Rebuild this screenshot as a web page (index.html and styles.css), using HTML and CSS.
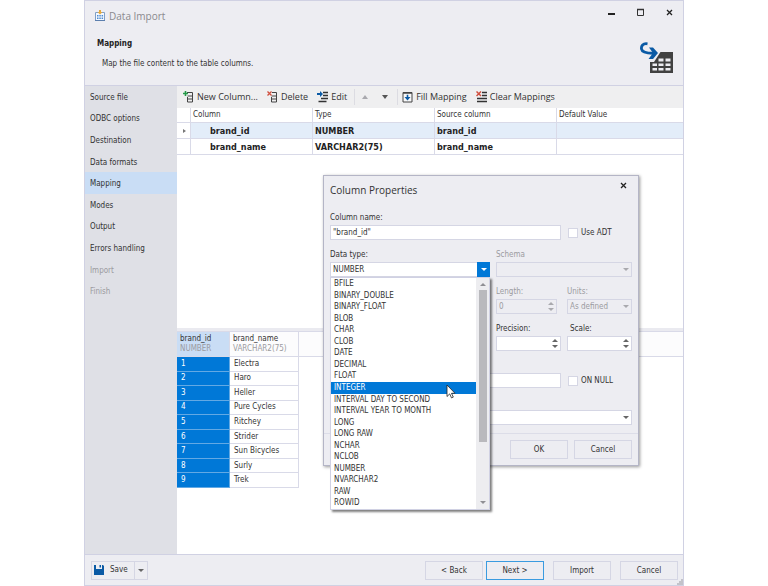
FILE: index.html
```
<!DOCTYPE html>
<html lang="en">
<head>
    <meta charset="UTF-8">
    <meta name="viewport" content="width=device-width, initial-scale=1.0">
    <title>Data Import</title>
    <link rel="stylesheet" href="styles.css">
</head>
<body>
    <div class="window">
        <header class="window-header">
            <div class="titlebar">
                <svg class="title-icon" width="12" height="12" viewBox="0 0 12 12">
                    <path d="M1.5 2.5h9v8h-9z" fill="#f4f9ff" stroke="#7f9fc6"/>
                    <path d="M1 10.500h10" stroke="#5c7fae"/>
                    <path d="M3 5h1.500v1.500H3zM5.300 5h1.500v1.500H5.300zM7.600 5h1.500v1.500H7.600zM3 7.500h1.500V9H3zM5.300 7.500h1.500V9H5.300zM7.600 7.500h1.500V9H7.600z" fill="#4d8ad0"/>
                    <path d="M5 0h2v2h1.500L6 4.500 3.500 2H5z" fill="#e6a93c"/>
                </svg>
                <h1>Data Import</h1>
                <div class="window-controls">
                    <button type="button" aria-label="Minimize"><svg width="9" height="9" viewBox="0 0 9 9"><path d="M1 5h7v2H1z" fill="#222"/></svg></button>
                    <button type="button" aria-label="Maximize"><svg width="9" height="9" viewBox="0 0 9 9"><path d="M1.500 1.500h6v6h-6z" fill="none" stroke="#333"/><path d="M1 1.500h7" stroke="#333" stroke-width="1.500"/></svg></button>
                    <button type="button" aria-label="Close"><svg width="9" height="9" viewBox="0 0 9 9"><path d="M2 2l5 5M7 2L2 7" stroke="#222" stroke-width="1.300"/></svg></button>
                </div>
            </div>
            <div class="page-info">
                <div>
                    <h2>Mapping</h2>
                    <p>Map the file content to the table columns.</p>
                </div>
                <svg width="34" height="32" viewBox="0 0 34 32">
                    <path d="M7.500 1.800C3 1 1 4 1.500 7c.6 3.500 5 4.500 13.500 4.200" fill="none" stroke="#0a5aa5" stroke-width="2.800"/>
                    <path d="M9 5.500h4l5 5.500-5 6H8.500l4.500-6z" fill="#0a5aa5"/>
                    <path d="M20.500 10H33v21H10V20h4z" fill="#414141"/>
                    <path d="M18.500 16.500h5v3h-5zM25.500 16.500h5v3h-5zM12.500 21.500h4.500v2.500h-4.500zM18.500 21.500h5v2.500h-5zM25.500 21.500h5v2.500h-5zM12.500 26h4.500v2.500h-4.500zM18.500 26h5v2.500h-5zM25.500 26h5v2.500h-5z" fill="#ededf2"/>
                </svg>
            </div>
        </header>

        <div class="workspace">
            <nav class="steps">
                <a href="#">Source file</a>
                <a href="#">ODBC options</a>
                <a href="#">Destination</a>
                <a href="#">Data formats</a>
                <a href="#" class="active">Mapping</a>
                <a href="#">Modes</a>
                <a href="#">Output</a>
                <a href="#">Errors handling</a>
                <a href="#" class="disabled">Import</a>
                <a href="#" class="disabled">Finish</a>
            </nav>

            <main class="content">
                <div class="toolbar">
                    <button type="button" class="tool">
                        <svg width="11" height="12" viewBox="0 0 11 12">
                            <path d="M4 1.500h5.500v9.500h-5V6M4.500 5h5M4.500 8h5" fill="none" stroke="#444"/>
                            <path d="M2.500 0v5M0 2.500h5" stroke="#259a48" stroke-width="1.600"/>
                        </svg>
                        New Column...
                    </button>
                    <button type="button" class="tool">
                        <svg width="11" height="12" viewBox="0 0 11 12">
                            <path d="M5 1.500h4.500v9.500h-5V6M4.500 5h5M4.500 8h5" fill="none" stroke="#444"/>
                            <path d="M.5.500l4 4M4.500.500l-4 4" stroke="#d0503f" stroke-width="1.300"/>
                        </svg>
                        Delete
                    </button>
                    <button type="button" class="tool">
                        <svg width="11" height="12" viewBox="0 0 11 12">
                            <path d="M6 1.500h5M6 4.500h5M4 7.500h7M1.500 10.500h8" stroke="#333" stroke-width="1.400"/>
                            <path d="M0 2h3V0l3 3-3 3V4H0z" fill="#0a5aa5"/>
                        </svg>
                        Edit
                    </button>
                    <span class="separator"></span>
                    <button type="button" class="tool arrow-tool" aria-label="Move up" disabled><span class="arrow up"></span></button>
                    <button type="button" class="tool arrow-tool" aria-label="Move down"><span class="arrow"></span></button>
                    <span class="separator"></span>
                    <button type="button" class="tool">
                        <svg width="11" height="12" viewBox="0 0 11 12">
                            <path d="M1 1.500h9v9.500H1z" fill="#f8f8f8" stroke="#444"/>
                            <path d="M1 2h9" stroke="#444" stroke-width="1.500"/>
                            <path d="M4.700 3.800h1.600V6H8.500l-3 3.500L2.500 6h2.200z" fill="#0a5aa5"/>
                        </svg>
                        Fill Mapping
                    </button>
                    <button type="button" class="tool">
                        <svg width="11" height="12" viewBox="0 0 11 12">
                            <path d="M6 1.500h5M6 4.500h5M1 7.500h10M1 10.500h10" stroke="#333" stroke-width="1.300"/>
                            <path d="M.5.500l4.500 4.500M5 .500L.5 5" stroke="#d0503f" stroke-width="1.500"/>
                        </svg>
                        Clear Mappings
                    </button>
                </div>

                <div class="mapping-pane">
                    <table class="mapping">
                        <colgroup>
                            <col class="col-marker"><col class="col-wide"><col class="col-wide"><col class="col-wide"><col>
                        </colgroup>
                        <thead>
                            <tr><th></th><th>Column</th><th>Type</th><th>Source column</th><th>Default Value</th></tr>
                        </thead>
                        <tbody>
                            <tr class="selected"><td><span class="row-marker"></span></td><td class="name">brand_id</td><td>NUMBER</td><td>brand_id</td><td></td></tr>
                            <tr><td></td><td class="name">brand_name</td><td>VARCHAR2(75)</td><td>brand_name</td><td></td></tr>
                        </tbody>
                    </table>
                </div>

                <div class="preview-pane">
                    <table class="preview">
                        <colgroup><col class="col-id"><col class="col-name"><col></colgroup>
                        <thead>
                            <tr>
                                <th class="selected">brand_id<small>NUMBER</small></th>
                                <th>brand_name<small>VARCHAR2(75)</small></th>
                                <th></th>
                            </tr>
                        </thead>
                        <tbody>
                            <tr><td>1</td><td>Electra</td></tr>
                            <tr><td>2</td><td>Haro</td></tr>
                            <tr><td>3</td><td>Heller</td></tr>
                            <tr><td>4</td><td>Pure Cycles</td></tr>
                            <tr><td>5</td><td>Ritchey</td></tr>
                            <tr><td>6</td><td>Strider</td></tr>
                            <tr><td>7</td><td>Sun Bicycles</td></tr>
                            <tr><td>8</td><td>Surly</td></tr>
                            <tr><td>9</td><td>Trek</td></tr>
                        </tbody>
                    </table>
                </div>
            </main>
        </div>

        <footer class="window-footer">
            <div class="split-button">
                <button type="button">
                    <svg width="10" height="10" viewBox="0 0 10 10">
                        <path d="M0 0h2v4h6V0h1l1 1v9H0z" fill="#0a5aa5"/>
                        <path d="M5.500 0h1.500v2.500H5.500z" fill="#0a5aa5"/>
                    </svg>
                    Save
                </button>
                <button type="button" class="split-arrow" aria-label="Save options"><span class="arrow small"></span></button>
            </div>
            <div class="nav-buttons">
                <button type="button" class="button">&lt; Back</button>
                <button type="button" class="button primary">Next &gt;</button>
            </div>
            <button type="button" class="button">Import</button>
            <button type="button" class="button">Cancel</button>
            <svg class="grip" width="6" height="6" viewBox="0 0 6 6"><path d="M4 0h2v6H0V4h2V2h2z" fill="#c3c3ca"/></svg>
        </footer>

        <form class="dialog" role="dialog" aria-labelledby="dialog-title">
            <div class="dialog-title">
                <h2 id="dialog-title">Column Properties</h2>
                <button type="button" aria-label="Close"><svg width="9" height="9" viewBox="0 0 9 9"><path d="M2 2l5 5M7 2L2 7" stroke="#222" stroke-width="1.300"/></svg></button>
            </div>

            <div class="fields">
                <div class="field span-two">
                    <label for="column-name">Column name:</label>
                    <input id="column-name" type="text" value="&quot;brand_id&quot;">
                </div>
                <label class="check"><input type="checkbox">Use ADT</label>

                <div class="field">
                    <label for="data-type">Data type:</label>
                    <div class="combo open">
                        <select id="data-type"><option>NUMBER</option></select>
                        <span class="combo-arrow"><span class="arrow small"></span></span>
                        <div class="popup">
                            <ul role="listbox" aria-label="Data type">
                                <li role="option">BFILE</li>
                                <li role="option">BINARY_DOUBLE</li>
                                <li role="option">BINARY_FLOAT</li>
                                <li role="option">BLOB</li>
                                <li role="option">CHAR</li>
                                <li role="option">CLOB</li>
                                <li role="option">DATE</li>
                                <li role="option">DECIMAL</li>
                                <li role="option">FLOAT</li>
                                <li role="option" class="hover">INTEGER</li>
                                <li role="option">INTERVAL DAY TO SECOND</li>
                                <li role="option">INTERVAL YEAR TO MONTH</li>
                                <li role="option">LONG</li>
                                <li role="option">LONG RAW</li>
                                <li role="option">NCHAR</li>
                                <li role="option">NCLOB</li>
                                <li role="option">NUMBER</li>
                                <li role="option">NVARCHAR2</li>
                                <li role="option">RAW</li>
                                <li role="option">ROWID</li>
                            </ul>
                            <div class="scrollbar">
                                <span class="arrow small up"></span>
                                <span class="thumb"></span>
                                <span class="arrow small"></span>
                            </div>
                            <svg class="pointer" width="10" height="15" viewBox="0 0 10 15">
                                <path d="M1 1v11.500l2.700-2.600 1.800 4 1.800-.8-1.800-3.800H9z" fill="#fff" stroke="#222" stroke-width=".8"/>
                            </svg>
                        </div>
                    </div>
                </div>
                <div class="field disabled span-two">
                    <label for="schema">Schema</label>
                    <div class="combo">
                        <select id="schema" disabled><option></option></select>
                        <span class="combo-arrow"><span class="arrow small"></span></span>
                    </div>
                </div>

                <div class="field disabled second short">
                    <label for="length">Length:</label>
                    <div class="spin">
                        <input id="length" type="number" value="0" disabled>
                        <span class="spin-arrows"><span class="arrow small up"></span><span class="arrow small"></span></span>
                    </div>
                </div>
                <div class="field disabled">
                    <label for="units">Units:</label>
                    <div class="combo">
                        <select id="units" disabled><option>As defined</option></select>
                        <span class="combo-arrow"><span class="arrow small"></span></span>
                    </div>
                </div>

                <div class="field second">
                    <label for="precision">Precision:</label>
                    <div class="spin">
                        <input id="precision" type="number">
                        <span class="spin-arrows"><span class="arrow small up"></span><span class="arrow small"></span></span>
                    </div>
                </div>
                <div class="field">
                    <label for="scale" class="inset">Scale:</label>
                    <div class="spin">
                        <input id="scale" type="number">
                        <span class="spin-arrows"><span class="arrow small up"></span><span class="arrow small"></span></span>
                    </div>
                </div>

                <div class="field span-two">
                    <input type="text" aria-label="Default value">
                </div>
                <label class="check"><input type="checkbox">ON NULL</label>

                <div class="field span-all">
                    <div class="combo">
                        <select aria-label="Sequence"><option></option></select>
                        <span class="combo-arrow"><span class="arrow small"></span></span>
                    </div>
                </div>
            </div>

            <div class="dialog-footer">
                <button type="button" class="button">OK</button>
                <button type="button" class="button">Cancel</button>
            </div>
        </form>
    </div>
</body>
</html>
```
FILE: styles.css
```
* {
    box-sizing: border-box;
}

body {
    margin: 0;
    padding: 0 84px;
    background-color: #fff;
    color: #333;
    font-family: "DejaVu Sans Condensed", "DejaVu Sans", sans-serif;
    font-size: 8px;
    line-height: 12px;
}

h1, h2, p, ul {
    margin: 0;
    padding: 0;
}

button, input, select {
    margin: 0;
    padding: 0;
    border: none;
    border-radius: 0;
    background: none;
    color: inherit;
    font: inherit;
}

svg {
    display: block;
    flex: none;
}

.window {
    position: relative;
    display: flex;
    flex-direction: column;
    min-height: 100vh;
    border: 1px solid #d0d1e3;
    background-color: #ededf2;
}

/* Header */
.window-header {
    height: 85px;
    border-bottom: 1px solid #d0d1e3;
}

.titlebar {
    display: flex;
    align-items: center;
    height: 30px;
    padding: 0 9px;
}

.titlebar h1 {
    margin-left: 3px;
    color: #8a8a8e;
    font-family: "Open Sans", sans-serif;
    font-size: 10px;
    font-weight: normal;
}

.window-controls {
    display: flex;
    gap: 20px;
    margin: -8px 0 0 auto;
}

.page-info {
    display: flex;
    justify-content: space-between;
    padding: 7px 9px 0 12px;
}

.page-info svg {
    margin-top: 4px;
}

.page-info h2 {
    color: #222;
    font-size: 8px;
}

.page-info p {
    margin: 8px 0 0 5px;
}

/* Body */
.workspace {
    display: flex;
    flex: 1;
}

.steps {
    flex: none;
    display: grid;
    grid-template-rows: repeat(10, 1fr);
    width: 92px;
    padding-bottom: 252px;
    background-color: #dfe0e6;
}

.steps a {
    display: flex;
    align-items: center;
    padding: 2px 0 0 5px;
    color: #333;
    text-decoration: none;
}

.steps a.active {
    background-color: #c9ddf5;
}

.steps a.disabled {
    color: #9b9ba0;
}

.content {
    display: flex;
    flex: 1;
    flex-direction: column;
    min-width: 0;
    background-color: #fff;
}

.toolbar {
    display: flex;
    align-items: center;
    height: 22px;
    padding-left: 6px;
    background-color: #efeff0;
}

.tool {
    display: flex;
    align-items: center;
    gap: 3px;
    margin-right: 9px;
    font-family: "Open Sans", sans-serif;
    font-size: 9px;
    white-space: nowrap;
}

.arrow-tool {
    justify-content: center;
    width: 20px;
    height: 20px;
    margin: 0;
}

.separator {
    width: 1px;
    height: 16px;
    margin-left: -2px;
    background-color: #dcdce2;
}

.arrow-tool + .separator {
    margin: 0 4px 0 2px;
}

.arrow {
    width: 0;
    height: 0;
    border: 3px solid transparent;
    border-top: 4px solid #555;
    border-bottom: none;
}

.arrow.small {
    border-width: 3px 3px 0;
    border-top-color: #666;
}

.arrow.up {
    transform: rotate(180deg);
}

:disabled .arrow,
.disabled .arrow.small {
    border-top-color: #a9a9ae;
}

/* Tables */
table {
    width: 100%;
    border-collapse: separate;
    border-spacing: 0;
    table-layout: fixed;
}

th {
    font-weight: normal;
    text-align: left;
}

th, td {
    padding: 0 2px;
    border-right: 1px solid #d9dae8;
    border-bottom: 1px solid #d9dae8;
    overflow: hidden;
    white-space: nowrap;
}

th:last-child,
.mapping td:last-child {
    border-right: none;
}

.mapping-pane {
    flex: 1;
}

.mapping th {
    height: 15px;
}

.mapping td {
    height: 16px;
    color: #222;
    font-size: 9px;
    font-weight: bold;
}

.mapping .name {
    padding-left: 19px;
}

.mapping tr.selected td {
    background-color: #e3edf9;
}

.mapping tr.selected td:first-child {
    background-color: #fff;
}

.col-marker {
    width: 14px;
}

.col-wide {
    width: 122px;
}

.row-marker {
    display: block;
    width: 0;
    margin-left: 4px;
    border: 2px solid transparent;
    border-left: 3px solid #777;
    border-right: none;
}

.preview-pane {
    min-height: 226px;
    border-top: 3px solid #eaeaf0;
}

.preview {
    height: 157px;
    border-top: 1px solid #d9dae8;
}

.col-id {
    width: 53px;
}

.col-name {
    width: 69px;
}

.preview th {
    height: 25px;
    padding-left: 3px;
    background-color: #fcfcfd;
    line-height: 10px;
}

.preview small {
    display: block;
    color: #9b9ba0;
    font-size: 8px;
}

.preview th.selected {
    background-color: #c9ddf5;
}

.preview td {
    padding-left: 4px;
}

.preview td:first-child {
    border-color: #63a9e4;
    background-color: #0078d7;
    color: #fff;
}

/* Footer */
.window-footer {
    display: flex;
    align-items: center;
    gap: 9px;
    height: 31px;
    padding: 0 5px 0 6px;
    border-top: 1px solid #d0d1e3;
}

.button {
    width: 58px;
    height: 19px;
    padding-top: 1px;
    border: 1px solid #d5d6e4;
}

.button.primary {
    border-color: #3a9be0;
}

.nav-buttons {
    display: flex;
    gap: 3px;
}

.split-button {
    display: flex;
    height: 19px;
    margin-right: auto;
    border: 1px solid #d5d6e4;
}

.split-button button {
    display: flex;
    align-items: center;
    gap: 6px;
    padding: 0 6px 0 2px;
}

.split-button .split-arrow {
    padding: 0 3px;
    border-left: 1px solid #d5d6e4;
}

.grip {
    position: absolute;
    right: 0;
    bottom: 0;
}

/* Dialog */
.dialog {
    position: absolute;
    top: 174px;
    left: 238px;
    width: 316px;
    border: 1px solid #b4b5c6;
    background-color: #ededf2;
    box-shadow: 1px 1px 3px rgba(0, 0, 0, 0.4);
}

.dialog-title {
    display: flex;
    justify-content: space-between;
    align-items: flex-start;
    padding: 5px 10px 0 6px;
}

.dialog-title h2 {
    margin-top: 3px;
    font-family: "Open Sans", sans-serif;
    font-size: 10px;
    font-weight: normal;
}

.fields {
    display: grid;
    grid-template-columns: 1fr 65px 65px;
    grid-auto-rows: 37px;
    align-items: end;
    column-gap: 6px;
    padding: 7px 6px 8px;
}

.span-two {
    grid-column: span 2;
}

.span-all {
    grid-column: span 3;
}

.second {
    grid-column: 2;
}

.field.short {
    width: 61px;
}

.field > label {
    display: block;
    margin-bottom: 1px;
}

.field .inset {
    padding-left: 3px;
}

.field.disabled {
    color: #9b9ba0;
}

.field input,
.field select {
    display: block;
    width: 100%;
    height: 15px;
    padding: 0 2px;
    border: 1px solid #d5d6e4;
    background-color: #fff;
    appearance: none;
}

.field input:disabled,
.field select:disabled {
    background-color: #ededf2;
    color: #9b9ba0;
    opacity: 1;
}

.field input[type="number"] {
    appearance: textfield;
}

.check {
    display: flex;
    align-items: center;
    gap: 3px;
    height: 15px;
    white-space: nowrap;
}

.check input {
    appearance: none;
    width: 10px;
    height: 10px;
    margin-left: 1px;
    border: 1px solid #d5d6e4;
    background-color: #fff;
}

.combo, .spin {
    position: relative;
}

.combo-arrow, .spin-arrows {
    position: absolute;
    top: 0;
    right: 0;
    bottom: 0;
    display: flex;
    flex-direction: column;
    align-items: center;
    justify-content: center;
    width: 13px;
    pointer-events: none;
}

.spin-arrows {
    justify-content: space-evenly;
}

.combo.open .combo-arrow {
    background-color: #0078d7;
}

.combo.open .combo-arrow .arrow {
    border-top-color: #fff;
}

.popup {
    position: absolute;
    top: 15px;
    left: 0;
    z-index: 2;
    display: flex;
    width: 160px;
    height: 233px;
    border: 1px solid #d0d1e3;
    background-color: #fff;
    box-shadow: 2px 2px 2px rgba(0, 0, 0, 0.5);
}

.popup ul {
    flex: 1;
    display: grid;
    grid-auto-rows: 1fr;
    list-style: none;
}

.popup li {
    padding-left: 3px;
    line-height: 12px;
    min-height: 0;
}

.popup li.hover {
    background-color: #0078d7;
    color: #fff;
}

.scrollbar {
    display: flex;
    flex-direction: column;
    align-items: center;
    width: 13px;
    padding: 5px 0;
    background-color: #ededf0;
}

.scrollbar .arrow {
    border-top-color: #8f8f94;
}

.thumb {
    width: 8px;
    height: 152px;
    margin: 4px 0 auto;
    background-color: #b9b9bd;
}

.pointer {
    position: absolute;
    top: 106px;
    left: 115px;
}

.dialog-footer {
    display: flex;
    justify-content: flex-end;
    gap: 6px;
    padding: 6px;
    border-top: 1px solid #dcdde8;
}
```
